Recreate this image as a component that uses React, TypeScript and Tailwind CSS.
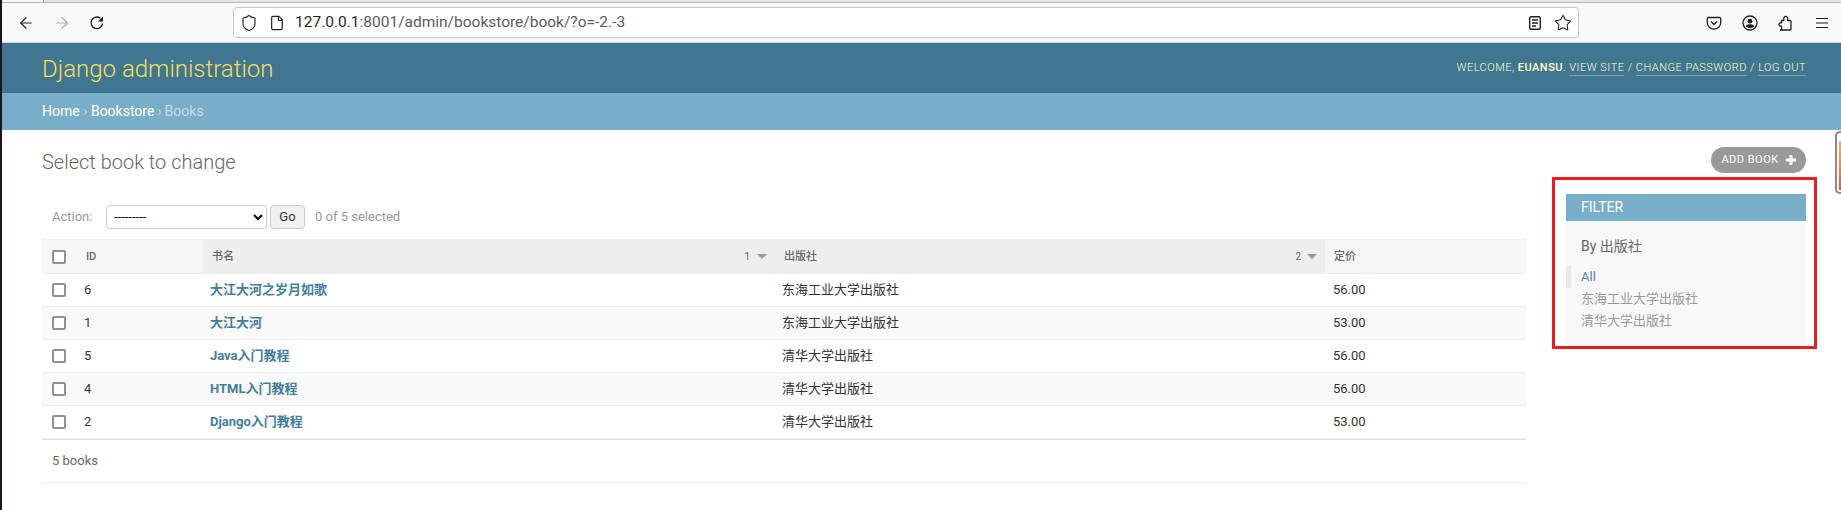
import { ArrowLeft, ArrowRight, Shield, File, Star } from 'lucide-react';

const rows = [
  { id: 6, name: '大江大河之岁月如歌', press: '东海工业大学出版社', price: '56.00' },
  { id: 1, name: '大江大河', press: '东海工业大学出版社', price: '53.00' },
  { id: 5, name: 'Java入门教程', press: '清华大学出版社', price: '56.00' },
  { id: 4, name: 'HTML入门教程', press: '清华大学出版社', price: '56.00' },
  { id: 2, name: 'Django入门教程', press: '清华大学出版社', price: '53.00' },
];

const cols = 'grid grid-cols-[160px_572px_551px_1fr]';
const font = { fontFamily: 'Roboto, "Noto Sans CJK SC", sans-serif' };

function Box() {
  return <span className="block w-[14px] h-[14px] rounded-[2px] border-2 border-[#8f8f9d] bg-white" />;
}

function Toolbar() {
  return (
    <div className="h-[43px] bg-[#f9f9fb] border-b border-b-[#cfcfd8] flex flex-col text-[#1f1f24]">
      <div className="h-[3px] flex border-b border-b-[#b5b5b5] bg-[#e6e6e6]">
        <div className="w-[42px] bg-[#f9f9fb] border-r border-r-[#a0a0a0]" />
      </div>
      <div className="flex-1 flex items-center">
        <div className="flex items-center w-[231px] pl-[15px] gap-[18px]">
          <ArrowLeft size={18} strokeWidth={1.5} />
          <ArrowRight size={18} strokeWidth={1.5} className="text-[#a8a8ad]" />
          <svg width="16" height="16" viewBox="0 0 16 16" fill="none" stroke="currentColor" strokeWidth="1.4">
            <path d="M13.6 8.4A5.8 5.8 0 1 1 11.4 3.2" />
            <path d="M14 1.5v5h-5z" fill="currentColor" stroke="none" />
          </svg>
        </div>
        <div className="w-[1346px] h-[31px] bg-white border border-[#c8c8cc] rounded-[4px] flex items-center pl-[6px] pr-[6px]">
          <Shield size={18} strokeWidth={1.5} />
          <File size={16} strokeWidth={1.8} className="ml-[11px]" />
          <span className="ml-[10px] text-[15.5px]">
            <span>127.0.0.1</span>
            <span className="text-[#5b5b66]">:8001/admin/bookstore/book/?o=-2.-3</span>
          </span>
          <div className="ml-auto flex items-center gap-[12px]">
            <svg width="14" height="16" viewBox="0 0 14 16" fill="none" stroke="currentColor" strokeWidth="1.4">
              <rect x="1.7" y="1.7" width="10.6" height="12.6" rx="1.5" />
              <path d="M4 5h6M4 8h6M4 11h4" />
            </svg>
            <Star size={18} strokeWidth={1.4} />
          </div>
        </div>
        <div className="flex-1 flex items-center justify-end gap-[20px] pr-[11px]">
          <svg width="16" height="16" viewBox="0 0 16 16" fill="none" stroke="currentColor" strokeWidth="1.3">
            <path d="M2.5 2.5h11A1.2 1.2 0 0 1 14.7 3.7V7.5A6.7 6.7 0 0 1 1.3 7.5V3.7A1.2 1.2 0 0 1 2.5 2.5z" />
            <path d="M5 6.5l3 3 3-3" />
          </svg>
          <svg width="16" height="16" viewBox="0 0 16 16" fill="none" stroke="currentColor" strokeWidth="1.3">
            <circle cx="8" cy="8" r="7" />
            <circle cx="8" cy="6.2" r="2.4" fill="currentColor" stroke="none" />
            <path d="M3.6 11.2c1-1.6 2.6-2 4.4-2s3.4.4 4.4 2c-1 1.2-2.6 1.8-4.4 1.8s-3.4-.6-4.4-1.8z" fill="currentColor" stroke="none" />
          </svg>
          <svg width="16" height="16" viewBox="0 0 16 16" fill="none" stroke="currentColor" strokeWidth="1.3" strokeLinejoin="round">
            <path d="M2 15h10a1 1 0 0 0 1-1V6.5a1 1 0 0 0-1-1H9.6V3.2a1.9 1.9 0 0 0-3.8 0v2.3H3.5v2.3H2.6a1.7 1.7 0 0 0 0 3.4h.9V15" />
          </svg>
          <svg width="16" height="16" viewBox="0 0 16 16" fill="none" stroke="currentColor" strokeWidth="1.2">
            <path d="M2 3.5h12M2 8h12M2 12.5h12" />
          </svg>
        </div>
      </div>
    </div>
  );
}

export default function App() {
  return (
    <div className="relative w-[1841px] h-[510px] overflow-hidden bg-white border-l-2 border-l-[#1c1418] text-[#333]" style={font}>
      <Toolbar />
      <div className="h-[50px] pt-px bg-[#417690] flex items-center justify-between pl-[40px] pr-[35px]">
        <div className="text-[24px] font-light text-[#f5dd5d]">Django administration</div>
        <div className="text-[11px] tracking-[0.5px] font-light text-[#ffffcc]">
          WELCOME, <b className="font-medium">EUANSU</b>.{' '}
          <span className="border-b border-[#ffffff50] pb-px">VIEW SITE</span> /{' '}
          <span className="border-b border-[#ffffff50] pb-px">CHANGE PASSWORD</span> /{' '}
          <span className="border-b border-[#ffffff50] pb-px">LOG OUT</span>
        </div>
      </div>
      <div className="h-[37px] bg-[#79aec8] flex items-center pl-[40px] text-[14px] text-[#c4dce8]">
        <span className="text-white">Home</span>
        <span className="mx-[3.5px]">›</span>
        <span className="text-white">Bookstore</span>
        <span className="mx-[3px]">›</span>
        <span>Books</span>
      </div>

      <div className="flex pl-[40px] pr-[35px]">
        <div className="w-[1484px]">
          <h1 className="h-[70px] pt-[17px] text-[20px] font-light text-[#666]">Select book to change</h1>
          <div className="h-[33px] mb-[6px] flex items-center text-[13px] text-[#999]">
            <span className="ml-[10px] w-[54px]">Action:</span>
            <select className="w-[161px] h-[24px] text-[13px] text-black bg-white border border-[#ccc] rounded-[4px] px-[3px]" style={font}>
              <option>---------</option>
            </select>
            <span className="ml-[3px] w-[35px] h-[24px] flex items-center justify-center bg-[#f0f0f0] border border-[#ccc] rounded-[4px] text-[#333]">Go</span>
            <span className="ml-[10px]">0 of 5 selected</span>
          </div>
          <div className={`${cols} h-[35px] items-stretch text-[11px] font-medium text-[#666] border-y border-[#eeeeee]`}>
            <div className="bg-[#f6f6f6] flex items-center pl-[10px]">
              <Box />
              <span className="ml-[20px] pt-px">ID</span>
            </div>
            <div className="bg-[#eeeeee] flex items-center pl-[10px] pr-[7px]">
              <span className="pt-px">书名</span>
              <span className="ml-auto text-[10px] font-normal mr-[7px]">1</span>
              <span className="w-0 h-0 border-x-[5px] border-x-transparent border-t-[5px] border-t-[#999]" />
            </div>
            <div className="bg-[#eeeeee] flex items-center pl-[10px] pr-[8px]">
              <span className="pt-px">出版社</span>
              <span className="ml-auto text-[10px] font-normal mr-[6px]">2</span>
              <span className="w-0 h-0 border-x-[5px] border-x-transparent border-t-[5px] border-t-[#999]" />
            </div>
            <div className="bg-[#f6f6f6] flex items-center pl-[9px]">
              <span className="pt-px">定价</span>
            </div>
          </div>
          {rows.map((r, i) => (
            <div key={r.id} className={`${cols} h-[33px] items-center text-[13px] border-b border-[#eeeeee] ${i % 2 ? 'bg-[#f9f9f9]' : 'bg-white'}`}>
              <div className="flex items-center pl-[10px]">
                <Box />
                <span className="ml-[18px]">{r.id}</span>
              </div>
              <div className="pl-[8px] font-bold text-[#447e9b]">{r.name}</div>
              <div className="pl-[8px]">{r.press}</div>
              <div className="pl-[8px]">{r.price}</div>
            </div>
          ))}
          <div className="h-[44px] flex items-center pl-[10px] text-[13px] text-[#666] border-t border-[#dddddd] border-b-[#eeeeee] border-b">5 books</div>
        </div>

        <div className="flex-1 pt-[17px] flex flex-col items-end">
          <div className="h-[26px] w-[95px] rounded-[13px] bg-[#999] flex items-center justify-center gap-[7px] text-[11px] tracking-[0.5px] text-white">
            ADD BOOK
            <svg width="10" height="10" viewBox="0 0 10 10" fill="white"><path d="M3.5 0h3v3.5H10v3H6.5V10h-3V6.5H0v-3h3.5z" /></svg>
          </div>
          <div className="mt-[21px] w-[240px] bg-[#f8f8f8]">
            <div className="h-[27px] bg-[#79aec8] flex items-center pl-[15px] text-[14px] text-white">FILTER</div>
            <div className="h-[129px] pt-[15px]">
              <div className="pl-[15px] text-[14px] text-[#666]">By 出版社</div>
              <div className="mt-[9px] text-[13px] leading-[22px] text-[#999]">
                <div className="border-l-[5px] border-[#eaeaea] pl-[10px] text-[#5b80b2]">All</div>
                <div className="pl-[15px]">东海工业大学出版社</div>
                <div className="pl-[15px]">清华大学出版社</div>
              </div>
            </div>
          </div>
        </div>
      </div>

      <div className="absolute left-[1550px] top-[177px] w-[265px] h-[172px] border-[3px] border-[#ed1c24]" />
      <div className="absolute left-[1833px] top-[131px] w-[8px] h-[63px] rounded-l-[5px] border-2 border-r-0 border-[#8a8a8a] bg-white pl-[2px] pt-[8px] pb-[2px]">
        <div className="h-full bg-linear-to-b from-[#f5b060] to-[#e8504a]" />
      </div>
    </div>
  );
}
